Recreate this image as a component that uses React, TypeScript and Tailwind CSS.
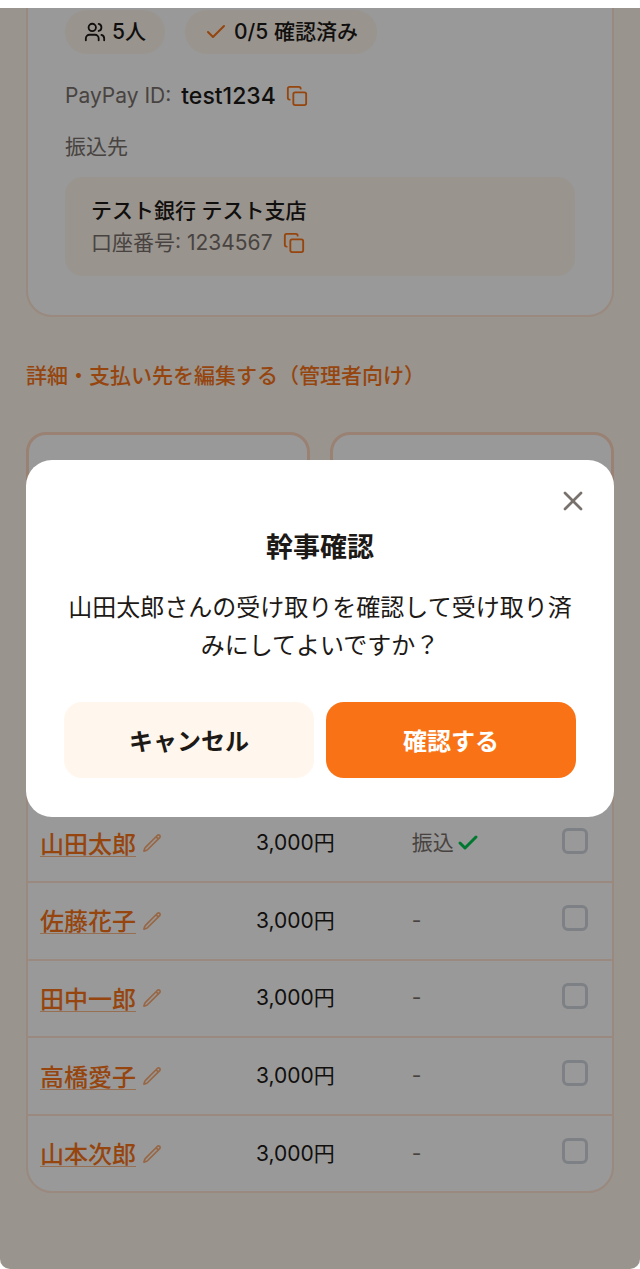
import { useState } from 'react';
import { Check, Copy, Users, X } from 'lucide-react';

interface Member {
  name: string;
  amount: string;
  method?: string;
}

const members: Member[] = [
  { name: '山田太郎', amount: '3,000円', method: '振込' },
  { name: '佐藤花子', amount: '3,000円' },
  { name: '田中一郎', amount: '3,000円' },
  { name: '高橋愛子', amount: '3,000円' },
  { name: '山本次郎', amount: '3,000円' },
];

function PencilIcon() {
  return (
    <svg
      viewBox="0 0 24 24"
      fill="none"
      stroke="currentColor"
      strokeWidth={2}
      strokeLinecap="round"
      strokeLinejoin="round"
      className="size-5 text-[#f97316]/60"
      aria-hidden="true"
    >
      <path d="m16.862 4.487 1.687-1.688a1.875 1.875 0 1 1 2.652 2.652L6.832 19.82a4.5 4.5 0 0 1-1.897 1.13l-2.685.8.8-2.685a4.5 4.5 0 0 1 1.13-1.897L16.863 4.487Zm0 0L19.5 7.125" />
    </svg>
  );
}

function CopyButton({ label }: { label: string }) {
  return (
    <button type="button" aria-label={label} className="text-[#f97316]">
      <Copy className="size-[22px]" strokeWidth={2} />
    </button>
  );
}

function PaymentCard() {
  return (
    <section className="rounded-b-[26px] border-2 border-t-0 border-[#ffe4d2] bg-white px-[37px] pt-0.5 pb-[39px]">
      <div className="flex gap-5 font-medium text-stone-900">
        <span className="flex h-11 items-center gap-1.5 rounded-full bg-orange-50 px-[19px]">
          <Users className="size-[22px]" strokeWidth={2} />
          5人
        </span>
        <span className="flex h-11 items-center gap-1.5 rounded-full bg-orange-50 px-[19px]">
          <Check className="size-6 text-[#f97316]" strokeWidth={2} />
          0/5 確認済み
        </span>
      </div>

      <div className="mt-[26px] flex items-center">
        <span className="text-stone-500">PayPay ID:</span>
        <span className="mr-2.5 ml-2.5 text-[23px] font-medium text-stone-900">test1234</span>
        <CopyButton label="PayPay IDをコピー" />
      </div>

      <p className="mt-[19px] text-stone-500">振込先</p>
      <div className="mt-3.5 rounded-[18px] bg-orange-50 px-[26px] pt-[18px] pb-[17px]">
        <p className="font-medium text-stone-900">テスト銀行 テスト支店</p>
        <div className="flex items-center gap-2.5 text-stone-500">
          <span>口座番号: 1234567</span>
          <CopyButton label="口座番号をコピー" />
        </div>
      </div>
    </section>
  );
}

function MemberTable() {
  return (
    <section className="mt-8 rounded-[26px] border-2 border-[#ffe4d2] bg-white pt-[180px]">
      <table className="h-[385px] w-full table-fixed">
        <colgroup>
          <col className="w-[37%]" />
          <col className="w-[27%]" />
          <col className="w-[22%]" />
          <col />
        </colgroup>
        <tbody>
          {members.map((m) => (
            <tr key={m.name} className="border-b-2 border-[#ffe4d2] last:border-b-0">
              <td className="px-3">
                <div className="flex items-center gap-1.5">
                  <a
                    href="#edit"
                    className="border-b border-[#f97316]/50 pt-1 text-2xl leading-[22px] font-medium text-[#f97316]"
                  >
                    {m.name}
                  </a>
                  <PencilIcon />
                </div>
              </td>
              <td className="px-3 text-stone-900">{m.amount}</td>
              <td className="px-2.5 text-stone-500">
                {m.method ? (
                  <span className="flex items-center gap-0.5">
                    {m.method}
                    <Check className="size-6 text-green-500" strokeWidth={3} />
                  </span>
                ) : (
                  '-'
                )}
              </td>
              <td className="pr-6 pb-2 text-right">
                <input
                  type="checkbox"
                  aria-label={`${m.name}の受け取り確認`}
                  className="size-[26px] appearance-none rounded-md border-3 border-gray-300 bg-white align-middle"
                />
              </td>
            </tr>
          ))}
        </tbody>
      </table>
    </section>
  );
}

function ConfirmDialog({ onClose }: { onClose: () => void }) {
  return (
    <div className="absolute inset-0 flex items-center justify-center bg-black/40 px-[26px]">
      <div
        role="dialog"
        aria-modal="true"
        aria-labelledby="dialog-title"
        className="relative w-full rounded-[26px] bg-white px-[38px] pt-[68px] pb-[39px] text-center text-stone-900"
      >
        <button
          type="button"
          aria-label="閉じる"
          onClick={onClose}
          className="absolute top-[25px] right-[25px] text-stone-500"
        >
          <X className="size-8" strokeWidth={2} />
        </button>
        <h2 id="dialog-title" className="text-[27px] leading-10 font-bold">
          幹事確認
        </h2>
        <p className="mt-[21px] text-2xl leading-[38px]">
          山田太郎さんの受け取りを確認して受け取り済みにしてよいですか？
        </p>
        <div className="mt-[37px] grid grid-cols-2 gap-3 text-2xl font-bold">
          <button type="button" onClick={onClose} className="h-[76px] rounded-[18px] bg-orange-50 pt-1">
            キャンセル
          </button>
          <button type="button" onClick={onClose} className="h-[76px] rounded-[18px] bg-[#f97316] pt-1 text-white">
            確認する
          </button>
        </div>
      </div>
    </div>
  );
}

export default function App() {
  const [open, setOpen] = useState(true);

  return (
    <div className="bg-white pt-2 font-['Inter','Noto_Sans_CJK_JP',sans-serif] text-[21px] leading-8">
      <div className="relative overflow-hidden rounded-b-[10px] bg-orange-50 px-[26px] pb-[76px]">
        <PaymentCard />

        <a href="#settings" className="mt-[43px] block font-medium text-[#f97316]">
          詳細・支払い先を編集する（管理者向け）
        </a>

        <div className="mt-10 grid grid-cols-2 gap-5">
          <div className="h-40 rounded-[20px] border-3 border-[#ffd8c0] bg-white" />
          <div className="h-40 rounded-[20px] border-3 border-[#ffd8c0] bg-white" />
        </div>

        <MemberTable />

        {open && <ConfirmDialog onClose={() => setOpen(false)} />}
      </div>
    </div>
  );
}
